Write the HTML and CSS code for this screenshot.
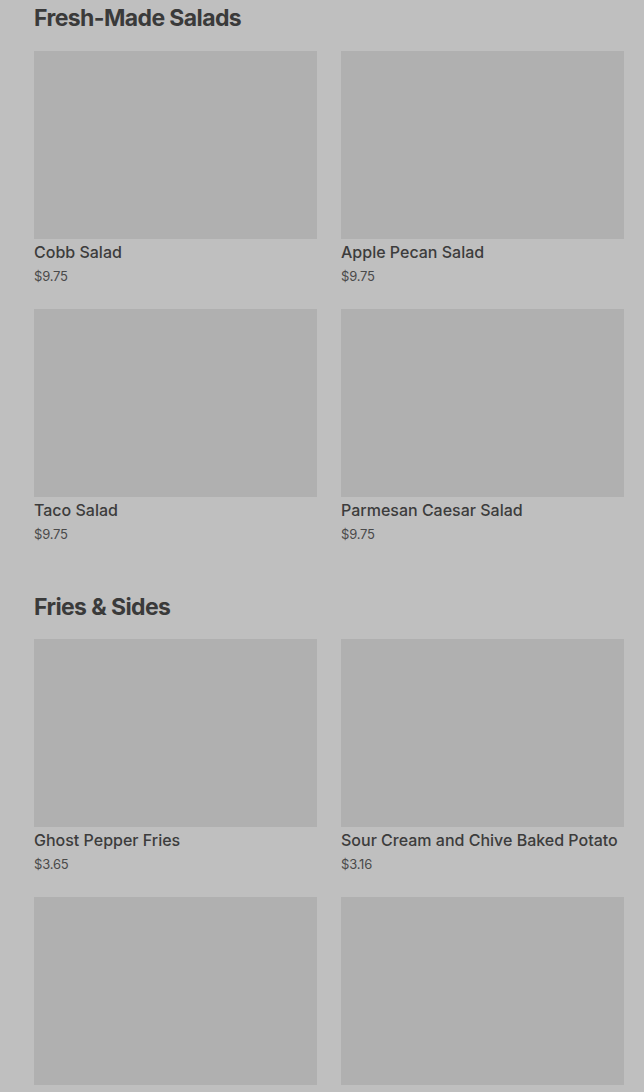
FILE: index.html
```html
<!DOCTYPE html>
<html lang="en">
<head>
<meta charset="utf-8">
<title>Menu</title>
<link rel="stylesheet" href="styles.css">
</head>
<body>
<main class="menu">
  <section class="menu-section">
    <h2 class="section-title">Fresh-Made Salads</h2>
    <div class="grid">
      <div class="card"><div class="card-img"></div><div class="card-name">Cobb Salad</div><div class="card-price">$9.75</div></div>
      <div class="card"><div class="card-img"></div><div class="card-name">Apple Pecan Salad</div><div class="card-price">$9.75</div></div>
      <div class="card"><div class="card-img"></div><div class="card-name">Taco Salad</div><div class="card-price">$9.75</div></div>
      <div class="card"><div class="card-img"></div><div class="card-name">Parmesan Caesar Salad</div><div class="card-price">$9.75</div></div>
    </div>
  </section>
  <section class="menu-section">
    <h2 class="section-title">Fries &amp; Sides</h2>
    <div class="grid">
      <div class="card"><div class="card-img"></div><div class="card-name">Ghost Pepper Fries</div><div class="card-price">$3.65</div></div>
      <div class="card"><div class="card-img"></div><div class="card-name">Sour Cream and Chive Baked Potato</div><div class="card-price">$3.16</div></div>
      <div class="card"><div class="card-img"></div></div>
      <div class="card"><div class="card-img"></div></div>
    </div>
  </section>
</main>
</body>
</html>
```
FILE: styles.css
```css
html, body {
  margin: 0;
  padding: 0;
  background: #bfbfbf;
  overflow: hidden;
}
body {
  font-family: Inter, "Noto Sans", sans-serif;
  color: #3a3a3a;
}
.menu {
  padding: 4px 20px 0 34px;
  display: flex;
  flex-direction: column;
  gap: 50px;
}
.section-title {
  margin: 0 0 19px 0;
  font-size: 23px;
  line-height: 28px;
  font-weight: 700;
  letter-spacing: -0.6px;
  color: #3a3a3a;
}
.menu-section + .menu-section .section-title {
  margin-bottom: 18px;
}
.grid {
  display: grid;
  grid-template-columns: 283px 283px;
  column-gap: 24px;
  row-gap: 24px;
}
.card {
  display: flex;
  flex-direction: column;
}
.card-img {
  height: 188px;
  background: #b0b0b0;
}
.card-name {
  margin-top: 2px;
  font-size: 16px;
  line-height: 22px;
  font-weight: 500;
  color: #3c3c3c;
  white-space: nowrap;
}
.card-price {
  margin-top: 4px;
  font-size: 13px;
  line-height: 18px;
  color: #4a4a4a;
  letter-spacing: -0.2px;
}
```
